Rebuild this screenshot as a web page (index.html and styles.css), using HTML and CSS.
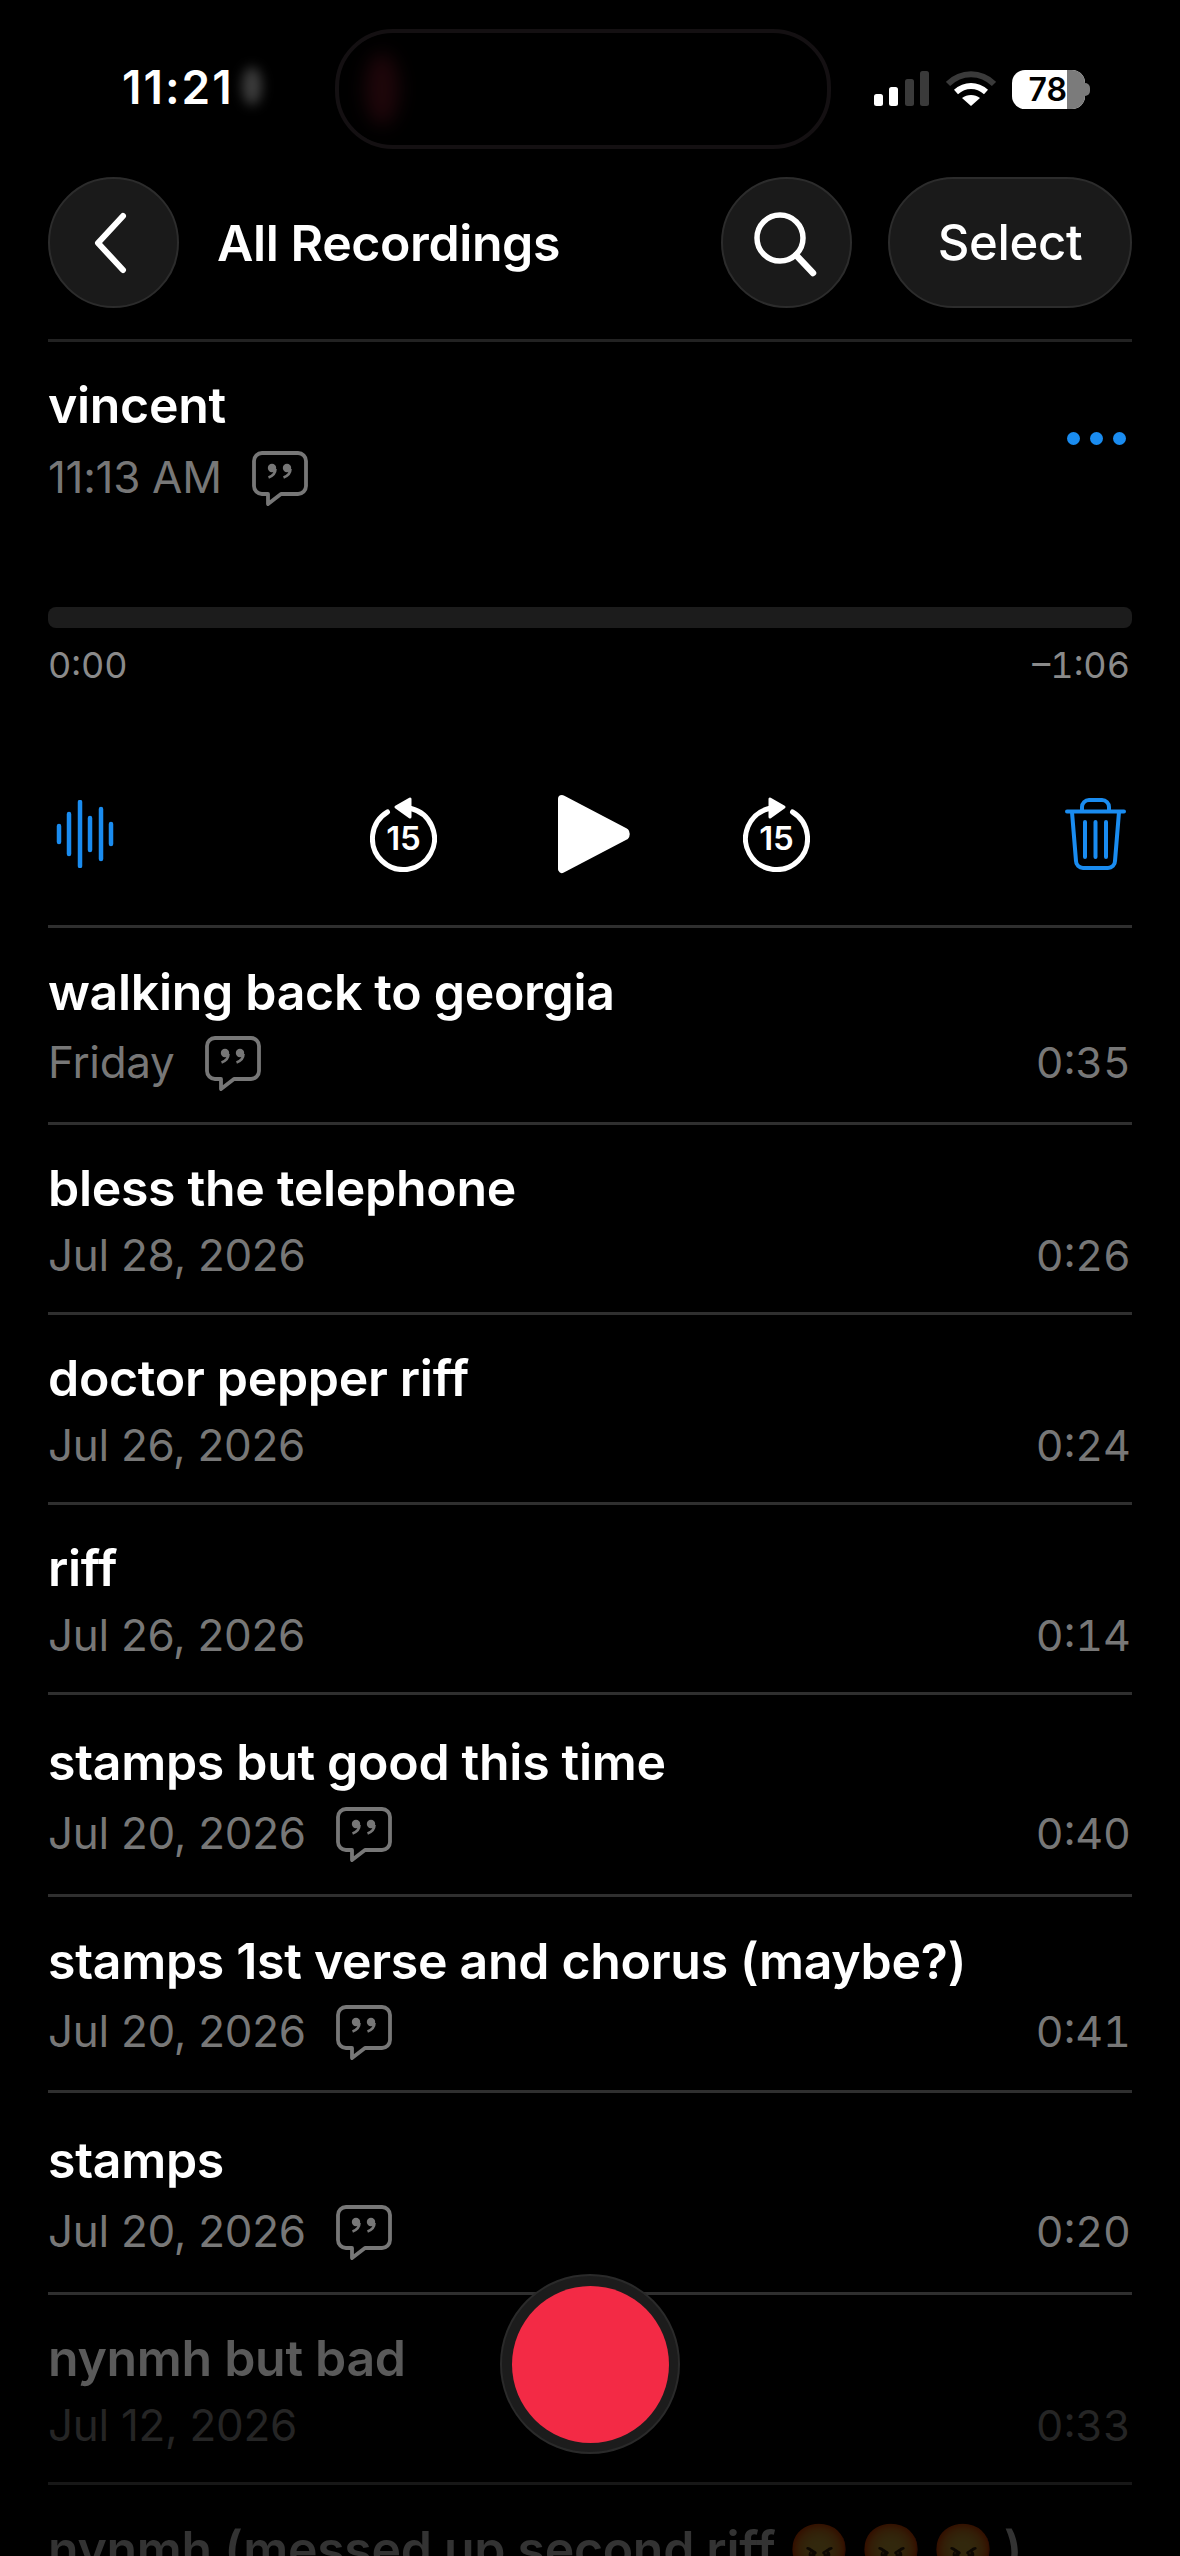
FILE: index.html
```html
<!DOCTYPE html>
<html lang="en">
<head>
  <meta charset="UTF-8">
  <title>All Recordings</title>
  <link rel="stylesheet" href="styles.css">
</head>
<body>
  <svg class="defs" width="0" height="0">
    <symbol id="quote" viewBox="0 0 56 56">
      <path d="M10 2h36a8 8 0 0 1 8 8v25a8 8 0 0 1-8 8H29L16 53v-10h-6a8 8 0 0 1-8-8V10a8 8 0 0 1 8-8z" fill="none" stroke="currentColor" stroke-width="3.8" stroke-linejoin="round"/>
      <circle cx="20" cy="17" r="4.200" fill="currentColor"/>
      <circle cx="35" cy="17" r="4.200" fill="currentColor"/>
      <path d="M23.500 18c0 4-3 7-7 8.500M38.500 18c0 4-3 7-7 8.500" fill="none" stroke="currentColor" stroke-width="2.600"/>
    </symbol>
  </svg>

  <div class="status">
    <div class="clock">11:21<span class="smudge"></span></div>
    <div class="island"><span class="glow"></span></div>
    <div class="status-icons">
      <svg width="56" height="36" viewBox="0 0 56 36">
        <rect x="0" y="23" width="9" height="12" rx="2.500" fill="#fff"/>
        <rect x="15" y="16" width="9" height="19" rx="2.500" fill="#fff"/>
        <rect x="31" y="8" width="9" height="27" rx="2.500" fill="#3a3a3a"/>
        <rect x="46" y="0" width="9" height="35" rx="2.500" fill="#3a3a3a"/>
      </svg>
      <svg width="50" height="36" viewBox="0 0 50 36">
        <path d="M2 13C15 0 35 0 48 13" fill="none" stroke="#3a3a3a" stroke-width="6"/>
        <path d="M10 21c9-8 21-8 30 0" fill="none" stroke="#fff" stroke-width="6"/>
        <path d="M25 35l-9-8c5-4 13-4 18 0z" fill="#fff"/>
      </svg>
      <div class="battery"><span class="battery-num">78</span><span class="battery-rest"></span></div>
      <span class="battery-tip"></span>
    </div>
  </div>

  <header class="nav">
    <div class="round-btn">
      <svg width="40" height="60" viewBox="0 0 40 60"><path d="M29 3L4 30l25 27" fill="none" stroke="#fff" stroke-width="6" stroke-linecap="round" stroke-linejoin="round"/></svg>
    </div>
    <div class="nav-title">All Recordings</div>
    <div class="round-btn">
      <svg class="search" width="66" height="66" viewBox="0 0 66 66"><circle cx="28" cy="28" r="23" fill="none" stroke="#fff" stroke-width="5.500"/><path d="M44 45l17 18" stroke="#fff" stroke-width="6.500" stroke-linecap="round"/></svg>
    </div>
    <div class="select-btn">Select</div>
  </header>

  <section class="player">
    <div class="player-head">
      <div>
        <div class="name">vincent</div>
        <div class="sub player-sub">11:13 AM <svg class="quote"><use href="#quote"/></svg></div>
      </div>
      <div class="dots"><i></i><i></i><i></i></div>
    </div>
    <div class="scrubber"></div>
    <div class="times"><span>0:00</span><span>–1:06</span></div>
    <div class="controls">
      <svg width="58" height="68" viewBox="0 0 58 68">
        <path d="M3 26v16M13 14v40M24 2v64M34 18v32M45 9v50M55 24v20" stroke="#1a8cf0" stroke-width="4.500" stroke-linecap="round"/>
      </svg>
      <div class="transport">
        <svg width="67" height="75" viewBox="0 0 67 75">
          <path d="M41 11.500A31 31 0 1 1 17.500 15" fill="none" stroke="#fff" stroke-width="5" stroke-linecap="round"/>
          <path d="M40 2v18L26 10z" fill="#fff" stroke="#fff" stroke-width="3" stroke-linejoin="round"/>
          <text x="33.500" y="53" class="skip-num" text-anchor="middle">15</text>
        </svg>
        <svg class="play" width="76" height="84" viewBox="0 0 76 84">
          <path d="M6 7L69 40a3 3 0 0 1 0 4L6 77z" fill="#fff" stroke="#fff" stroke-width="8" stroke-linejoin="round"/>
        </svg>
        <svg width="67" height="75" viewBox="0 0 67 75">
          <path d="M26 11.500A31 31 0 1 0 49.500 15" fill="none" stroke="#fff" stroke-width="5" stroke-linecap="round"/>
          <path d="M27 2v18L41 10z" fill="#fff" stroke="#fff" stroke-width="3" stroke-linejoin="round"/>
          <text x="33.500" y="53" class="skip-num" text-anchor="middle">15</text>
        </svg>
      </div>
      <svg width="61" height="72" viewBox="0 0 61 72">
        <path d="M2 13.500h57M17 13V9a7 7 0 0 1 7-7h13a7 7 0 0 1 7 7v4M7 14l4 49a7 7 0 0 0 7 7h25a7 7 0 0 0 7-7l4-49M20 24v35M30.500 24v35M41 24v35" fill="none" stroke="#1a8cf0" stroke-width="4" stroke-linecap="round" stroke-linejoin="round"/>
      </svg>
    </div>
  </section>

  <ul class="list">
    <li class="row row-197">
      <div class="name">walking back to georgia</div>
      <div class="meta"><span class="sub">Friday <svg class="quote"><use href="#quote"/></svg></span><span class="dur">0:35</span></div>
    </li>
    <li class="row row-190">
      <div class="name">bless the telephone</div>
      <div class="meta"><span class="sub">Jul 28, 2026</span><span class="dur">0:26</span></div>
    </li>
    <li class="row row-190">
      <div class="name">doctor pepper riff</div>
      <div class="meta"><span class="sub">Jul 26, 2026</span><span class="dur">0:24</span></div>
    </li>
    <li class="row row-190">
      <div class="name">riff</div>
      <div class="meta"><span class="sub">Jul 26, 2026</span><span class="dur">0:14</span></div>
    </li>
    <li class="row row-202">
      <div class="name">stamps but good this time</div>
      <div class="meta"><span class="sub">Jul 20, 2026 <svg class="quote"><use href="#quote"/></svg></span><span class="dur">0:40</span></div>
    </li>
    <li class="row row-196">
      <div class="name">stamps 1st verse and chorus (maybe?)</div>
      <div class="meta"><span class="sub">Jul 20, 2026 <svg class="quote"><use href="#quote"/></svg></span><span class="dur">0:41</span></div>
    </li>
    <li class="row row-202">
      <div class="name">stamps</div>
      <div class="meta"><span class="sub">Jul 20, 2026 <svg class="quote"><use href="#quote"/></svg></span><span class="dur">0:20</span></div>
    </li>
    <li class="row row-190 fade-1">
      <div class="name">nynmh but bad</div>
      <div class="meta"><span class="sub">Jul 12, 2026</span><span class="dur">0:33</span></div>
    </li>
    <li class="row fade-2">
      <div class="name">nynmh (messed up second riff <span class="emoji">😡😡😡</span>)</div>
    </li>
  </ul>

  <div class="record"><span></span></div>
</body>
</html>
```
FILE: styles.css
```css
* { box-sizing: border-box; }
html, body { margin: 0; background: #000; }
body { width: 1180px; height: 2556px; overflow: hidden; position: relative; color: #fff; font-family: Inter, "Liberation Sans", sans-serif; }
.defs { position: absolute; }

.status { height: 177px; padding: 29px 0 0 122px; display: flex; align-items: flex-start; }
.clock { width: 213px; margin-top: 30px; font-size: 46px; line-height: 56px; font-weight: 600; letter-spacing: 2px; position: relative; }
.smudge { position: absolute; left: 120px; top: 8px; width: 20px; height: 38px; border-radius: 50%; background: #3c3c3c; filter: blur(6px); }
.island { width: 496px; height: 120px; border: 4px solid #141012; border-radius: 58px; position: relative; overflow: hidden; flex: none; }
.glow { position: absolute; left: 26px; top: 20px; width: 34px; height: 72px; border-radius: 50%; background: #1e060a; filter: blur(9px); }
.status-icons { margin: 40px 0 0 43px; display: flex; align-items: center; gap: 16px; height: 40px; }
.battery { width: 73px; height: 39px; border-radius: 13px; background: #fff; overflow: hidden; display: flex; justify-content: space-between; color: #000; }
.battery-num { width: 55px; font-size: 32px; line-height: 39px; font-weight: 600; text-align: right; }
.battery-rest { width: 18px; background: #7b7b7b; }
.battery-tip { width: 5px; height: 13px; margin-left: -16px; background: #7b7b7b; border-radius: 0 5px 5px 0; }

.nav { display: flex; align-items: center; padding: 0 48px; height: 131px; }
.round-btn { width: 131px; height: 131px; border-radius: 50%; background: #1a1a1a; border: 2px solid #2c2c2c; display: flex; align-items: center; justify-content: center; flex: none; }
.round-btn svg { overflow: visible; }
.search { margin-right: 3px; }
.nav-title { flex: 1; padding-left: 38px; font-size: 50px; font-weight: 600; letter-spacing: -.4px; }
.select-btn { width: 244px; height: 131px; margin-left: 36px; border-radius: 66px; background: #1a1a1a; border: 2px solid #2c2c2c; display: flex; align-items: center; justify-content: center; font-size: 49px; font-weight: 500; letter-spacing: -.3px; }

.player { margin: 31px 48px 0; border-top: 3px solid #222; height: 589px; border-bottom: 3px solid #2f2f2f; }
.player-head { display: flex; justify-content: space-between; align-items: flex-start; padding: 35px 6px 0 0; }
.name { font-size: 50px; line-height: 56px; font-weight: 600; letter-spacing: -.3px; white-space: nowrap; }
.sub { font-size: 44px; color: #777; display: inline-flex; align-items: center; letter-spacing: -.3px; white-space: nowrap; }
.player-sub { line-height: 56px; margin-top: 16px; }
.quote { width: 56px; height: 56px; margin-left: 30px; color: #777; flex: none; position: relative; top: 2px; }
.dots { display: flex; gap: 10px; margin-top: 55px; }
.dots i { width: 13px; height: 13px; border-radius: 50%; background: #1a8cf0; }
.scrubber { height: 21px; margin-top: 102px; border-radius: 8px; background: #1c1c1c; }
.times { display: flex; justify-content: space-between; margin-top: 16px; font-size: 36px; line-height: 42px; color: #8a8a8a; font-variant-numeric: tabular-nums; padding-right: 2px; }
.controls { display: flex; align-items: center; justify-content: space-between; margin-top: 106px; padding: 0 6px 0 8px; height: 84px; }
.transport { width: 440px; display: flex; align-items: center; justify-content: space-between; }
.play { margin-left: 8px; }
.skip-num { font-size: 33px; font-weight: 600; fill: #fff; }

.list { list-style: none; margin: 0 48px; padding: 0; }
.row { border-bottom: 3px solid #2f2f2f; padding-top: 36px; }
.row-197 { height: 197px; }
.row-190 { height: 190px; padding-top: 35px; }
.row-196 { height: 196px; }
.row-202 { height: 202px; padding-top: 39px; }
.meta { display: flex; justify-content: space-between; align-items: center; margin-top: 11px; height: 56px; }
.row-197 .meta, .row-196 .meta { margin-top: 14px; }
.row-202 .meta { margin-top: 15px; }
.dur { font-size: 43px; color: #777; font-variant-numeric: tabular-nums; padding-right: 1px; }

.fade-1 .name { color: #5a5a5a; }
.fade-1 .sub, .fade-1 .dur { color: #252525; }
.fade-1 { border-bottom-color: #171717; }
.fade-2 .name { color: #333; }
.emoji { font-size: 50px; letter-spacing: 10px; opacity: .2; }

.record { position: absolute; left: 500px; top: 2274px; width: 180px; height: 180px; border-radius: 50%; background: #1c1c1c; border: 2px solid #2a2a2a; display: flex; align-items: center; justify-content: center; }
.record span { width: 157px; height: 157px; border-radius: 50%; background: #f32a45; }
```
